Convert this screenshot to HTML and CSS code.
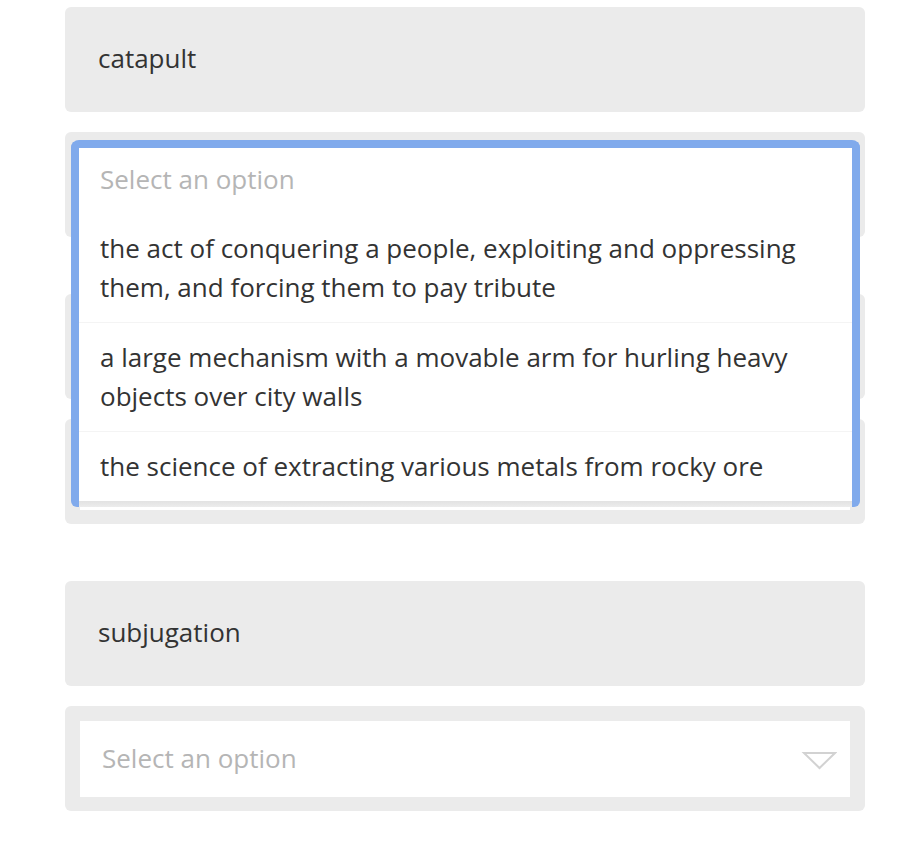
FILE: index.html
```html
<!DOCTYPE html>
<html lang="en">
<head>
<meta charset="utf-8">
<title>Match</title>
<link rel="stylesheet" href="styles.css">
</head>
<body>
<main class="list">
  <section class="pair">
    <div class="card word">catapult</div>
    <div class="card select-card">
      <div class="control"></div>
      <div class="menu">
        <div class="menu-head">Select an option</div>
        <div class="option">the act of conquering a people, exploiting and oppressing them, and forcing them to pay tribute</div>
        <div class="option">a large mechanism with a movable arm for hurling heavy objects over city walls</div>
        <div class="option">the science of extracting various metals from rocky ore</div>
      </div>
    </div>
  </section>
  <section class="pair">
    <div class="card word"></div>
    <div class="card select-card">
      <div class="control"></div>
    </div>
  </section>
  <section class="pair">
    <div class="card word">subjugation</div>
    <div class="card select-card">
      <div class="control">
        <span class="placeholder">Select an option</span>
        <svg class="arrow" width="36" height="20" viewBox="0 0 36 20"><path d="M3 3 L34 3 L18.5 18 Z" fill="none" stroke="#d2d2d2" stroke-width="2" stroke-linejoin="miter"/></svg>
      </div>
    </div>
  </section>
</main>
</body>
</html>
```
FILE: styles.css
```css
html, body {
  margin: 0;
  padding: 0;
  background: #ffffff;
}
body {
  font-family: "Open Sans", "Noto Sans", sans-serif;
  color: #333333;
}
.list {
  width: 800px;
  padding: 7px 0 0 65px;
  display: flex;
  flex-direction: column;
  gap: 57px;
}
.pair {
  display: flex;
  flex-direction: column;
  gap: 20px;
}
.card {
  height: 105px;
  box-sizing: border-box;
  background: #ebebeb;
  border-radius: 6px;
}
.word {
  display: flex;
  align-items: center;
  padding: 0 0 3px 33px;
  font-size: 26px;
  line-height: 36px;
  color: #333333;
}
.select-card {
  position: relative;
  padding: 15px;
}
.control {
  height: 76px;
  background: #ffffff;
  display: flex;
  align-items: center;
  justify-content: space-between;
  padding: 0 13px 0 22px;
  font-size: 26px;
}
.placeholder {
  color: #b5b5b5;
  line-height: 36px;
  margin-top: -3px;
}
.arrow {
  display: block;
  margin-top: 2px;
}
.menu {
  position: absolute;
  z-index: 5;
  top: 8px;
  left: 6px;
  right: 5px;
  border: 8px solid #80aaec;
  border-bottom: none;
  border-radius: 8px 8px 6px 6px;
  padding-bottom: 6px;
  background: linear-gradient(to bottom, #ffffff calc(100% - 6px), #e2e2e2 calc(100% - 6px), #ececec 100%);
  font-size: 26px;
}
.menu-head {
  height: 66px;
  box-sizing: border-box;
  display: flex;
  align-items: center;
  padding: 0 0 4px 21px;
  color: #b5b5b5;
  line-height: 36px;
}
.option {
  padding: 15px 40px 15px 21px;
  line-height: 39px;
  color: #333333;
  border-top: 1px solid #f4f4f4;
}
.menu-head + .option {
  border-top: none;
}
```
